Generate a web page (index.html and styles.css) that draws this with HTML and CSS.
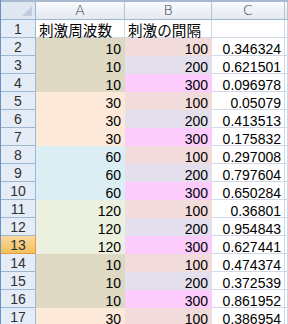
FILE: index.html
```html
<!DOCTYPE html>
<html lang="ja">
<head>
<meta charset="utf-8">
<link rel="stylesheet" href="styles.css">
</head>
<body>
<div class="sheet">
  <div class="top"></div>
  <div class="row head">
    <div class="corner"><span class="tri"></span></div>
    <div class="ch">A</div>
    <div class="ch">B</div>
    <div class="ch">C</div>
    <div class="ch"></div>
  </div>
  <div class="row">
    <div class="rh">1</div>
    <div class="c txt">刺激周波数</div>
    <div class="c txt">刺激の間隔</div>
    <div class="c"></div>
    <div class="c"></div>
  </div>
  <div class="row"><div class="rh">2</div><div class="c num tan">10</div><div class="c num b1">100</div><div class="c num">0.346324</div><div class="c"></div></div>
  <div class="row"><div class="rh">3</div><div class="c num tan">10</div><div class="c num b2">200</div><div class="c num">0.621501</div><div class="c"></div></div>
  <div class="row"><div class="rh">4</div><div class="c num tan">10</div><div class="c num b3">300</div><div class="c num">0.096978</div><div class="c"></div></div>
  <div class="row"><div class="rh">5</div><div class="c num peach">30</div><div class="c num b1">100</div><div class="c num">0.05079</div><div class="c"></div></div>
  <div class="row"><div class="rh">6</div><div class="c num peach">30</div><div class="c num b2">200</div><div class="c num">0.413513</div><div class="c"></div></div>
  <div class="row"><div class="rh">7</div><div class="c num peach">30</div><div class="c num b3">300</div><div class="c num">0.175832</div><div class="c"></div></div>
  <div class="row"><div class="rh">8</div><div class="c num blue">60</div><div class="c num b1">100</div><div class="c num">0.297008</div><div class="c"></div></div>
  <div class="row"><div class="rh">9</div><div class="c num blue">60</div><div class="c num b2">200</div><div class="c num">0.797604</div><div class="c"></div></div>
  <div class="row"><div class="rh">10</div><div class="c num blue">60</div><div class="c num b3">300</div><div class="c num">0.650284</div><div class="c"></div></div>
  <div class="row"><div class="rh">11</div><div class="c num green">120</div><div class="c num b1">100</div><div class="c num">0.36801</div><div class="c"></div></div>
  <div class="row"><div class="rh">12</div><div class="c num green">120</div><div class="c num b2">200</div><div class="c num">0.954843</div><div class="c"></div></div>
  <div class="row"><div class="rh sel">13</div><div class="c num green">120</div><div class="c num b3">300</div><div class="c num">0.627441</div><div class="c"></div></div>
  <div class="row"><div class="rh">14</div><div class="c num tan">10</div><div class="c num b1">100</div><div class="c num">0.474374</div><div class="c"></div></div>
  <div class="row"><div class="rh">15</div><div class="c num tan">10</div><div class="c num b2">200</div><div class="c num">0.372539</div><div class="c"></div></div>
  <div class="row"><div class="rh">16</div><div class="c num tan">10</div><div class="c num b3">300</div><div class="c num">0.861952</div><div class="c"></div></div>
  <div class="row"><div class="rh">17</div><div class="c num peach">30</div><div class="c num b1">100</div><div class="c num">0.386954</div><div class="c"></div></div>
</div>
</body>
</html>
```

FILE: styles.css
```css
html, body {
  margin: 0;
  padding: 0;
  background: #ffffff;
  overflow: hidden;
}
.sheet {
  width: 288px;
  height: 324px;
  overflow: hidden;
  border-left: 1px solid #6f8fbf;
  box-sizing: border-box;
  font-family: "Liberation Sans", "Noto Sans CJK JP", sans-serif;
  font-size: 14px;
  color: #000;
}
.top {
  height: 2px;
  background: #a8b9d0;
}
.row {
  display: grid;
  grid-template-columns: 35px 89px 87px 73px 3px;
  height: 18px;
}
.row > div {
  box-sizing: border-box;
  height: 18px;
  border-right: 1px solid #d0d7e5;
  border-bottom: 1px solid #d0d7e5;
  overflow: hidden;
  white-space: nowrap;
}
.head > div {
  background: linear-gradient(#f8fafd, #e4e9f1);
  border-right: 1px solid #b9c4d3;
  border-bottom: 1px solid #9eb6ce;
  color: #404040;
  text-align: center;
  line-height: 17px;
  font-size: 14px;
  font-family: "DejaVu Sans", sans-serif;
  font-weight: 200;
}
.head > .corner {
  background: #dfe7f2;
  border-right: 1px solid #9eb6ce;
  position: relative;
}
.tri {
  position: absolute;
  right: 3px;
  bottom: 3px;
  width: 0;
  height: 0;
  border-left: 10px solid transparent;
  border-bottom: 10px solid #c2cee0;
}
.row > .rh {
  background: #e4ecf7;
  border-right: 1px solid #9eb6ce;
  border-bottom: 1px solid #9eb6ce;
  text-align: center;
  line-height: 18px;
  color: #303030;
}
.row > .rh.sel {
  background: linear-gradient(#f9d99f, #f1c15f);
  border-bottom-color: #f29536;
  border-right-color: #f29536;
}
.c {
  display: flex;
  align-items: flex-end;
}
.num {
  justify-content: flex-end;
  padding-right: 3px;
  line-height: 12px;
}
.row > .txt {
  display: block;
  padding-left: 3px;
  padding-top: 3px;
  font-family: "Noto Sans CJK JP", sans-serif;
  font-size: 14.6px;
  line-height: 14px;
  overflow: visible;
}
.row > .tan { background: #ddd9c3; border-color: #ddd9c3; }
.row > .peach { background: #fde9d9; border-color: #fde9d9; }
.row > .blue { background: #daeef3; border-color: #daeef3; }
.row > .green { background: #ebf1de; border-color: #ebf1de; }
.row > .b1 { background: #f2dcdb; border-color: #f2dcdb; }
.row > .b2 { background: #e4dfec; border-color: #e4dfec; }
.row > .b3 { background: #fcccfc; border-color: #fcccfc; }
```
